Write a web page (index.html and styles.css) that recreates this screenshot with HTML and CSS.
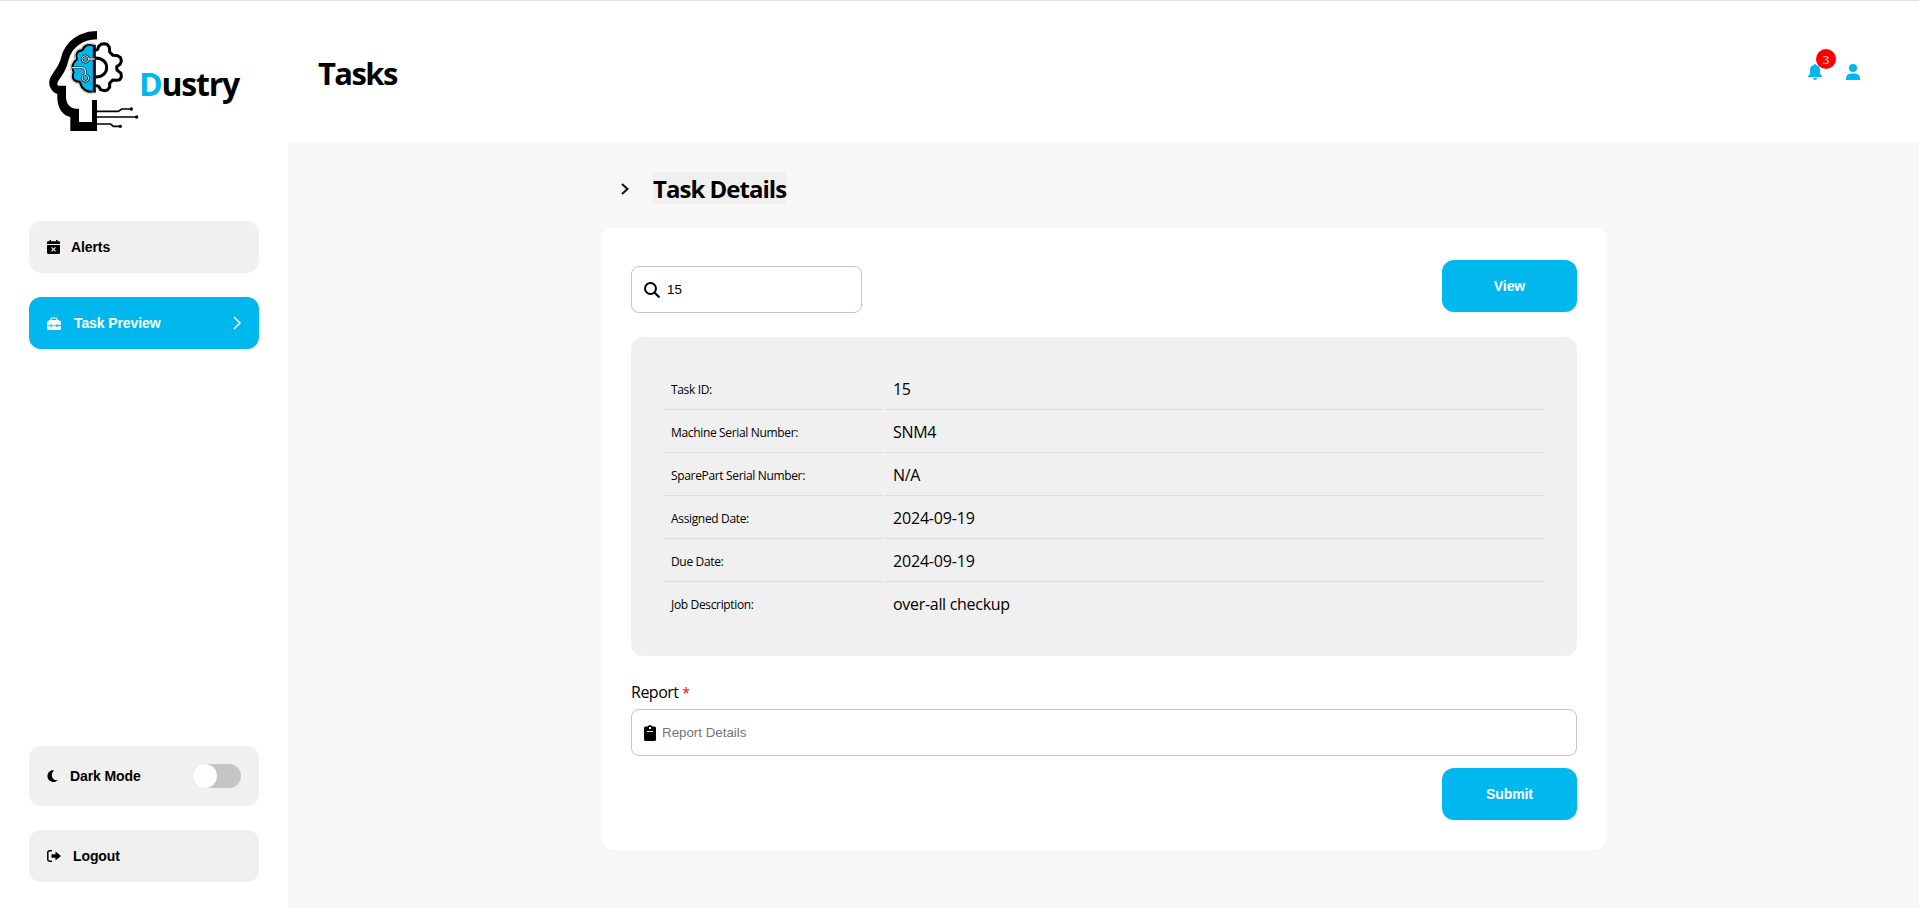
FILE: index.html
```html
<!DOCTYPE html>
<html lang="en">
<head>
<meta charset="utf-8">
<title>Dustry - Tasks</title>
<link rel="stylesheet" href="styles.css">
</head>
<body>
<div class="app">
  <aside class="sidebar">
    <div class="brand">
      <svg class="brand-mark" viewBox="51 54 282 312" fill="none">
        <path d="M201 63C148 64 108 92 94 140C89 162 77 177 66 194C57 207 55 222 62 235C67 244 74 250 82 252V268C84 297 101 319 121 321V363H201V270H186V336H147V296H136C119 294 108 279 108 260V227H84C79 221 85 212 91 204C101 190 111 172 115 152C126 111 158 89 201 88Z" fill="#000"/>
        <path d="M196 121L203 118L206 109L213 103L222 101L231 103L238 111L239 126L249 136L263 137L272 143L274 154L270 163L260 170L261 180L273 190L274 202L269 209L259 211L248 210L239 220L239 232L232 240L222 242L212 239L206 229L196 226" stroke="#000" stroke-width="9" stroke-linejoin="round"/>
        <path d="M196 144C219 144 230 158 230 173S217 202 196 201" stroke="#000" stroke-width="9"/>
        <path d="M193 107C180 99 162 103 157 119C140 120 134 132 139 148C128 154 121 171 129 187C122 208 134 217 149 217C153 239 174 252 193 245Z" fill="#00b7ee" stroke="#000" stroke-width="9" stroke-linejoin="round"/>
        <path d="M193 104C179 96 159 100 154 116C137 118 131 132 136 146C125 153 117 171 126 187C118 210 131 220 146 220C151 243 174 256 193 248" stroke="#d8d8d8" stroke-width="4"/>
        <path d="M194 147H172M129 173H155Q166 173 166 184V198" stroke="#222" stroke-width="7"/>
        <g><circle cx="166" cy="147" r="10" stroke="#222" stroke-width="7"/><circle cx="166" cy="204" r="10" stroke="#222" stroke-width="7"/><circle cx="166" cy="147" r="10" stroke="#d8d8d8" stroke-width="3"/><circle cx="166" cy="204" r="10" stroke="#d8d8d8" stroke-width="3"/></g>
        <path d="M194 147H177M125 173H155Q166 173 166 184V194" stroke="#d8d8d8" stroke-width="4"/>
        <path d="M199 304H265L275 297H303M199 321H319M199 342H242L250 349H270" stroke="#000" stroke-width="5"/>
        <g fill="#000"><circle cx="304" cy="297" r="5"/><circle cx="320" cy="321" r="5"/><circle cx="271" cy="349" r="5"/></g>
      </svg>
      <div class="brand-name"><span>D</span>ustry</div>
    </div>
    <nav class="menu">
      <a class="item alerts"><svg class="i-cal" viewBox="0 0 13 14"><path fill="#000" d="M2.500 0h1.500v1.300h5V0h1.500v1.300H12q1 0 1 1V4H0V2.300q0-1 1-1h1.500zM0 5h13v7.500q0 1.500-1.500 1.500h-10Q0 14 0 12.500z"/><path d="M4.500 7.300l4 4m0-4l-4 4" stroke="#f0f0f0" stroke-width="1.200"/></svg><span>Alerts</span></a>
      <a class="item active"><svg class="i-box" viewBox="0 0 14 13"><path d="M4 4V2.200Q4 1 5 1h4q1 0 1 1.200V4" fill="none" stroke="#fff" stroke-width="1.200"/><path fill="#fff" d="M3 3h8q3 .5 3 3v2H10.500V7H9.500v1.500H4.500V7H3.500v1.500H0V6q0-2.500 3-3zM0 9.300h3.500v.9h1v-.9h5v.9h1v-.9H14V12q0 1-1 1H1q-1 0-1-1z"/></svg><span>Task Preview</span><svg class="chev" viewBox="0 0 8 14"><path d="M1 1l6 6-6 6" fill="none" stroke="#fff" stroke-width="1.500"/></svg></a>
    </nav>
    <div class="menu menu-bottom">
      <div class="item tall"><svg class="i-moon" viewBox="0 0 11 12"><path d="M7.300.3A5.900 5.900 0 1 0 10.800 10C5 11.200 2.700 4 7.300.3z"/></svg><span>Dark Mode</span><i class="switch"></i></div>
      <a class="item"><svg class="i-out" viewBox="0 0 14 12"><path d="M5 .8H2.500Q.8.800.8 2.500v7q0 1.700 1.700 1.700H5" fill="none" stroke="#000" stroke-width="1.500"/><path d="M4.500 4.300H8.500V1.500L14 6 8.500 10.500V7.700H4.500z"/></svg><span>Logout</span></a>
    </div>
  </aside>
  <div class="page">
    <header class="header">
      <h1>Tasks</h1>
      <div class="tools">
        <div class="bell"><svg viewBox="0 0 14 16"><path d="M7 0q1 0 1 1c3 .5 4 2.500 4 5v4l2 2v1H0v-1l2-2V6c0-2.500 1-4.500 4-5q0-1 1-1zM5 14h4q0 2-2 2t-2-2z"/></svg><b>3</b></div>
        <svg class="user" viewBox="0 0 14 16"><circle cx="7" cy="4" r="4"/><path d="M0 16v-1.500q0-4.500 5-5h4q5 .5 5 5V16z"/></svg>
      </div>
    </header>
    <main class="main">
      <div class="heading"><svg viewBox="0 0 8 12"><path d="M1 1l5.500 5L1 11" fill="none" stroke="#111" stroke-width="2"/></svg><h2>Task Details</h2></div>
      <section class="card">
        <div class="search-row">
          <label class="field search"><svg viewBox="0 0 16 16"><circle cx="6.500" cy="6.500" r="5.500" fill="none" stroke="#000" stroke-width="2"/><path d="M10.500 10.500l5 5" stroke="#000" stroke-width="2.200"/></svg><span>15</span></label>
          <button class="btn">View</button>
        </div>
        <dl class="details">
          <dt>Task ID:</dt><dd>15</dd>
          <dt>Machine Serial Number:</dt><dd>SNM4</dd>
          <dt>SparePart Serial Number:</dt><dd>N/A</dd>
          <dt>Assigned Date:</dt><dd class="date">2024-09-19</dd>
          <dt>Due Date:</dt><dd class="date">2024-09-19</dd>
          <dt>Job Description:</dt><dd>over-all checkup</dd>
        </dl>
        <div class="label">Report <em>*</em></div>
        <label class="field report"><svg viewBox="0 0 12 16"><path fill-rule="evenodd" d="M3.500 1.500Q4.500 0 6 0t2.500 1.500H10.500Q12 1.500 12 3v11.500Q12 16 10.500 16h-9Q0 16 0 14.500V3q0-1.500 1.500-1.500zM5 2v2h2V2zM3 6v1h6v-1z"/></svg><span>Report Details</span></label>
        <button class="btn submit">Submit</button>
      </section>
    </main>
  </div>
</div>
</body>
</html>
```
FILE: styles.css
```css
* { box-sizing: border-box; }
body { margin: 0; font-family: "Open Sans", "Noto Sans", sans-serif; color: #000; background: #fff; }
svg { display: block; flex: none; }
h1, h2, dl, dd { margin: 0; }
.app { display: flex; height: 908px; border-top: 1px solid #e0e0e0; overflow: hidden; }

.sidebar { width: 288px; padding: 27px 29px 26px; display: flex; flex-direction: column; }
.brand { display: flex; height: 104px; padding-left: 18px; margin-bottom: 89px; }
.brand-mark { width: 94px; height: 104px; }
.brand-name { font-size: 32px; font-weight: 700; line-height: 44px; letter-spacing: -1.2px; padding-top: 34px; margin-left: -2px; }
.brand-name span { color: #00b7ee; }
.menu { display: flex; flex-direction: column; gap: 24px; }
.menu-bottom { margin-top: auto; }
.item { display: flex; align-items: center; height: 52px; padding: 0 18px; border-radius: 12px; background: #f0f0f0; font: bold 14px "Liberation Sans", sans-serif; gap: 12px; white-space: nowrap; letter-spacing: -.1px; }
.alerts { gap: 11px; }
.active { background: #00b7ee; color: #fff; gap: 13px; }
.tall { height: 60px; }
.i-cal { width: 13px; height: 14px; }
.i-box { width: 14px; height: 13px; }
.i-moon { width: 11px; height: 12px; }
.i-out { width: 14px; height: 12px; }
.chev { width: 8px; height: 14px; margin-left: auto; }
.switch { width: 48px; height: 24px; border-radius: 12px; background: #c5c5c5; margin-left: auto; display: flex; }
.switch::before { content: ""; width: 24px; height: 24px; border-radius: 50%; background: #fff; }

.page { flex: 1; display: flex; flex-direction: column; }
.header { height: 141px; display: flex; justify-content: space-between; padding: 0 59px 0 30px; }
h1 { font-size: 31px; line-height: 44px; font-weight: 700; letter-spacing: -1.6px; padding-top: 50px; }
.tools { display: flex; gap: 24px; padding-top: 63px; fill: #00b7ee; }
.tools svg { width: 14px; height: 16px; }
.bell { position: relative; }
.bell b { position: absolute; left: 8px; top: -15px; width: 20px; height: 20px; border-radius: 50%; background: #f00; color: #fff; font: 13px/21px "Liberation Serif", serif; text-align: center; }
.main { flex: 1; background: #f7f7f7; padding: 30px 312px 0 313px; }
.heading { display: flex; align-items: center; height: 32px; padding-left: 20px; margin-bottom: 24px; }
.heading svg { width: 8px; height: 12px; margin: 2px 24px 0 0; }
h2 { font-size: 24px; height: 32px; line-height: 34px; letter-spacing: -.98px; background: #f0f0f0; white-space: nowrap; }
.card { height: 622px; padding: 32px 30px 30px; border-radius: 12px; background: #fff; display: flex; flex-direction: column; }
.search-row { display: flex; justify-content: space-between; height: 53px; margin-bottom: 24px; }
.field { height: 47px; flex: none; border: 1px solid #c5c5c5; border-radius: 8px; display: flex; align-items: center; padding: 0 12px; font: 13.33px "Liberation Sans", sans-serif; }
.search { width: 231px; margin-top: 6px; gap: 7px; }
.search svg { width: 16px; height: 16px; margin-top: 1px; }
.btn { width: 135px; height: 52px; flex: none; border: 0; border-radius: 12px; background: #00b7ee; color: #fff; font: bold 14px "Liberation Sans", sans-serif; letter-spacing: -.1px; }
.details { height: 319px; flex: none; padding: 32px; border-radius: 12px; background: #f0f0f0; display: grid; grid-template-columns: 220px 660px; grid-auto-rows: 41px; gap: 2px; }
dt, dd { border-bottom: 1px solid #dcdcdc; padding-left: 8px; line-height: 41px; font-size: 16px; letter-spacing: -.3px; }
dt { font-size: 12px; letter-spacing: -.34px; }
.date { letter-spacing: -.18px; }
dt:last-of-type, dd:last-of-type { border-color: transparent; }
.label { font-size: 16px; line-height: 22px; margin: 25px 0 6px; letter-spacing: -.5px; margin-bottom: 5px; }
em { color: #f00; font-style: normal; font-size: 14px; }
.report { gap: 6px; color: #757575; margin-bottom: 12px; }
.report svg { width: 12px; height: 16px; fill: #000; }
.submit { align-self: flex-end; }
```
